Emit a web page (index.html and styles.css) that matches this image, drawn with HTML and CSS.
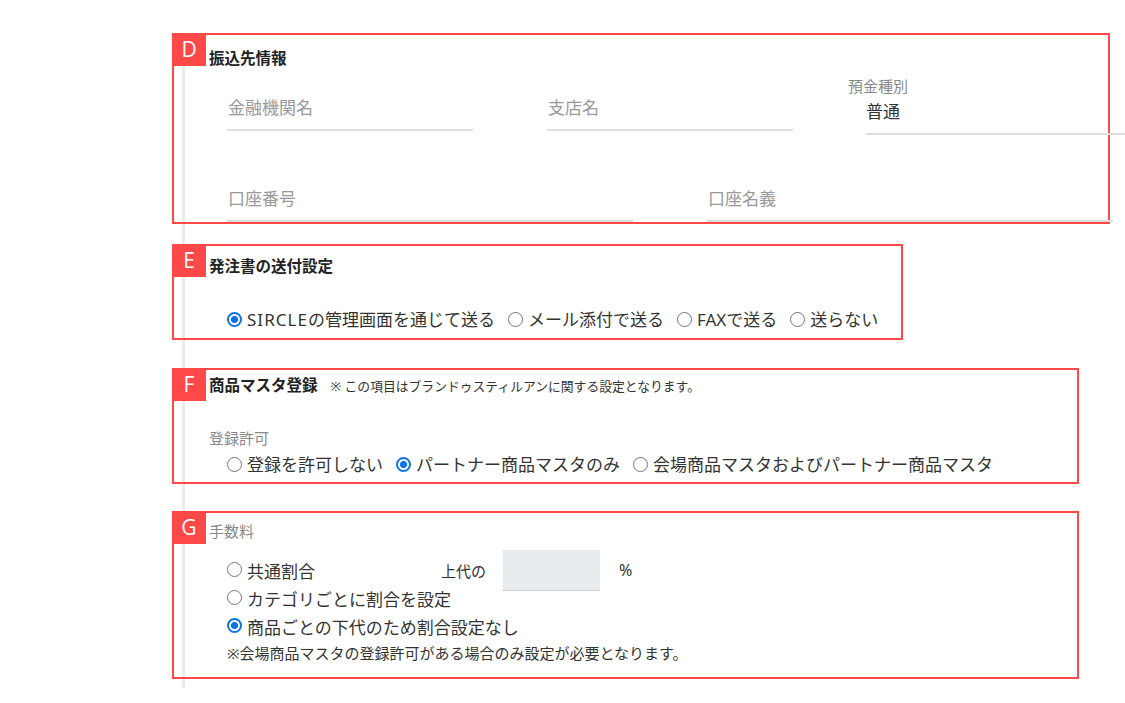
FILE: index.html
```html
<!DOCTYPE html>
<html lang="ja">
<head>
    <meta charset="UTF-8">
    <meta name="viewport" content="width=device-width, initial-scale=1.0">
    <title>取引先設定</title>
    <link rel="stylesheet" href="styles.css">
</head>
<body>
    <div class="page">
        <div class="form">
            <!-- 振込先情報 -->
            <section class="block block-bank">
                <span class="block-mark">D</span>
                <h3 class="block-title">振込先情報</h3>
                <div class="field-row field-row-3">
                    <div class="field">
                        <input type="text" class="field-input" placeholder="金融機関名">
                    </div>
                    <div class="field">
                        <input type="text" class="field-input" placeholder="支店名">
                    </div>
                    <div class="field field-labeled">
                        <label class="field-label">預金種別</label>
                        <select class="field-input field-select">
                            <option>普通</option>
                            <option>当座</option>
                        </select>
                    </div>
                </div>
                <div class="field-row field-row-2">
                    <div class="field">
                        <input type="text" class="field-input" placeholder="口座番号">
                    </div>
                    <div class="field">
                        <input type="text" class="field-input" placeholder="口座名義">
                    </div>
                </div>
            </section>

            <!-- 発注書の送付設定 -->
            <section class="block block-order">
                <span class="block-mark">E</span>
                <h3 class="block-title">発注書の送付設定</h3>
                <div class="radio-row">
                    <label class="radio"><input type="radio" name="order" checked><span><span class="brand">SIRCLE</span>の管理画面を通じて送る</span></label>
                    <label class="radio"><input type="radio" name="order"><span>メール添付で送る</span></label>
                    <label class="radio"><input type="radio" name="order"><span>FAXで送る</span></label>
                    <label class="radio"><input type="radio" name="order"><span>送らない</span></label>
                </div>
            </section>

            <!-- 商品マスタ登録 -->
            <section class="block block-master">
                <span class="block-mark">F</span>
                <h3 class="block-title">商品マスタ登録<span class="block-note">※ この項目はブランドゥスティルアンに関する設定となります。</span></h3>
                <div class="sub-label">登録許可</div>
                <div class="radio-row radio-row-tight">
                    <label class="radio"><input type="radio" name="master"><span>登録を許可しない</span></label>
                    <label class="radio"><input type="radio" name="master" checked><span>パートナー商品マスタのみ</span></label>
                    <label class="radio"><input type="radio" name="master"><span>会場商品マスタおよびパートナー商品マスタ</span></label>
                </div>
            </section>

            <!-- 手数料 -->
            <section class="block block-fee">
                <span class="block-mark">G</span>
                <div class="sub-label sub-label-top">手数料</div>
                <div class="radio-list">
                    <div class="radio-line">
                        <label class="radio radio-wide"><input type="radio" name="fee"><span>共通割合</span></label>
                        <span class="rate-text">上代の</span>
                        <input type="text" class="rate-input">
                        <span class="rate-unit">%</span>
                    </div>
                    <div class="radio-line">
                        <label class="radio"><input type="radio" name="fee"><span>カテゴリごとに割合を設定</span></label>
                    </div>
                    <div class="radio-line">
                        <label class="radio"><input type="radio" name="fee" checked><span>商品ごとの下代のため割合設定なし</span></label>
                    </div>
                    <p class="fee-note">※会場商品マスタの登録許可がある場合のみ設定が必要となります。</p>
                </div>
            </section>
        </div>
    </div>
</body>
</html>
```

FILE: styles.css
```css
* {
    margin: 0;
    padding: 0;
    box-sizing: border-box;
}

body {
    background-color: #fff;
    color: #333;
    font-family: "Noto Sans", "Noto Sans CJK JP", sans-serif;
}

.page {
    padding-top: 33px;
}

.form {
    margin-left: 182px;
    border-left: 3px solid #ebebeb;
    padding-bottom: 9px;
}

/* annotated blocks */
.block {
    position: relative;
    margin-left: -13px;
    border: 2px solid #ff4848;
    padding-left: 35px;
}

.block-mark {
    position: absolute;
    top: -2px;
    left: -2px;
    width: 34px;
    height: 33px;
    background-color: #ff4848;
    color: #fff;
    font-family: "Open Sans", sans-serif;
    font-size: 21px;
    line-height: 33px;
    text-align: center;
}

.block-bank {
    width: 938px;
    height: 191px;
    padding-top: 13px;
}

.block-order {
    width: 731px;
    height: 96px;
    margin-top: 20px;
    padding-top: 10px;
}

.block-master {
    width: 907px;
    height: 116px;
    margin-top: 28px;
    padding-top: 5px;
}

.block-fee {
    width: 907px;
    height: 168px;
    margin-top: 27px;
    padding-top: 8px;
}

.block-title {
    font-size: 15.5px;
    font-weight: bold;
    line-height: 20px;
    color: #222;
}

.block-note {
    margin-left: 13px;
    font-size: 12.8px;
    font-weight: normal;
    line-height: 1;
    color: #333;
}

/* bank fields */
.field-row {
    display: grid;
}

.field-row-3 {
    grid-template-columns: repeat(3, 320px);
    margin-top: 8px;
}

.field-row-2 {
    grid-template-columns: repeat(2, 480px);
    margin-top: 32px;
}

.field {
    padding: 16px 56px 0 18px;
}

.field-labeled {
    padding-top: 0;
    padding-left: 0;
}

.field-label {
    display: block;
    margin-left: -1px;
    font-size: 15px;
    line-height: 20px;
    color: #888;
}

.field-labeled .field-input {
    margin-left: 17px;
}

.field-input {
    display: block;
    width: 100%;
    height: 39px;
    padding: 0 0 7px 1px;
    border: none;
    border-bottom: 2px solid #ddd;
    background: transparent;
    font-family: inherit;
    font-size: 17px;
    color: #333;
    outline: none;
    appearance: none;
    border-radius: 0;
}

.field-select {
    padding-left: 0;
    width: calc(100% + 1px);
}

.field-input::placeholder {
    color: #999;
}

/* radios */
.radio-row {
    display: flex;
    margin-top: 32px;
    padding-left: 18px;
    font-size: 17px;
    line-height: 24px;
}

.radio-row-tight {
    margin-top: 5px;
}

.radio {
    display: inline-flex;
    align-items: center;
    gap: 5px;
    margin-right: 13px;
    white-space: nowrap;
}

.radio input {
    appearance: none;
    flex: none;
    width: 15px;
    height: 15px;
    margin: 0 0 2px;
    border: 1px solid #767676;
    border-radius: 50%;
    background-color: #fff;
}

.radio input:checked {
    border: 2px solid #0a74e8;
    background: radial-gradient(circle, #0a74e8 0 3.3px, #fff 3.8px);
}

.brand {
    letter-spacing: 0.06em;
}

.sub-label {
    margin-top: 33px;
    font-size: 15px;
    line-height: 20px;
    color: #888;
}

.sub-label-top {
    margin-top: 0;
}

/* fee */
.radio-list {
    margin-top: 15px;
    padding-left: 18px;
    font-size: 17px;
}

.radio-line {
    display: flex;
    align-items: center;
    height: 28px;
}

.radio-wide {
    width: 214px;
    margin-right: 0;
}

.rate-text {
    font-size: 15px;
}

.rate-input {
    width: 97px;
    height: 41px;
    margin-left: 17px;
    border: none;
    border-bottom: 1px dotted #bbb;
    background-color: #e9ecef;
    font-family: inherit;
    font-size: 15px;
    outline: none;
}

.rate-unit {
    margin-left: 19px;
    font-size: 16px;
}

.fee-note {
    margin-top: 3px;
    font-size: 15px;
    line-height: 20px;
}
```
